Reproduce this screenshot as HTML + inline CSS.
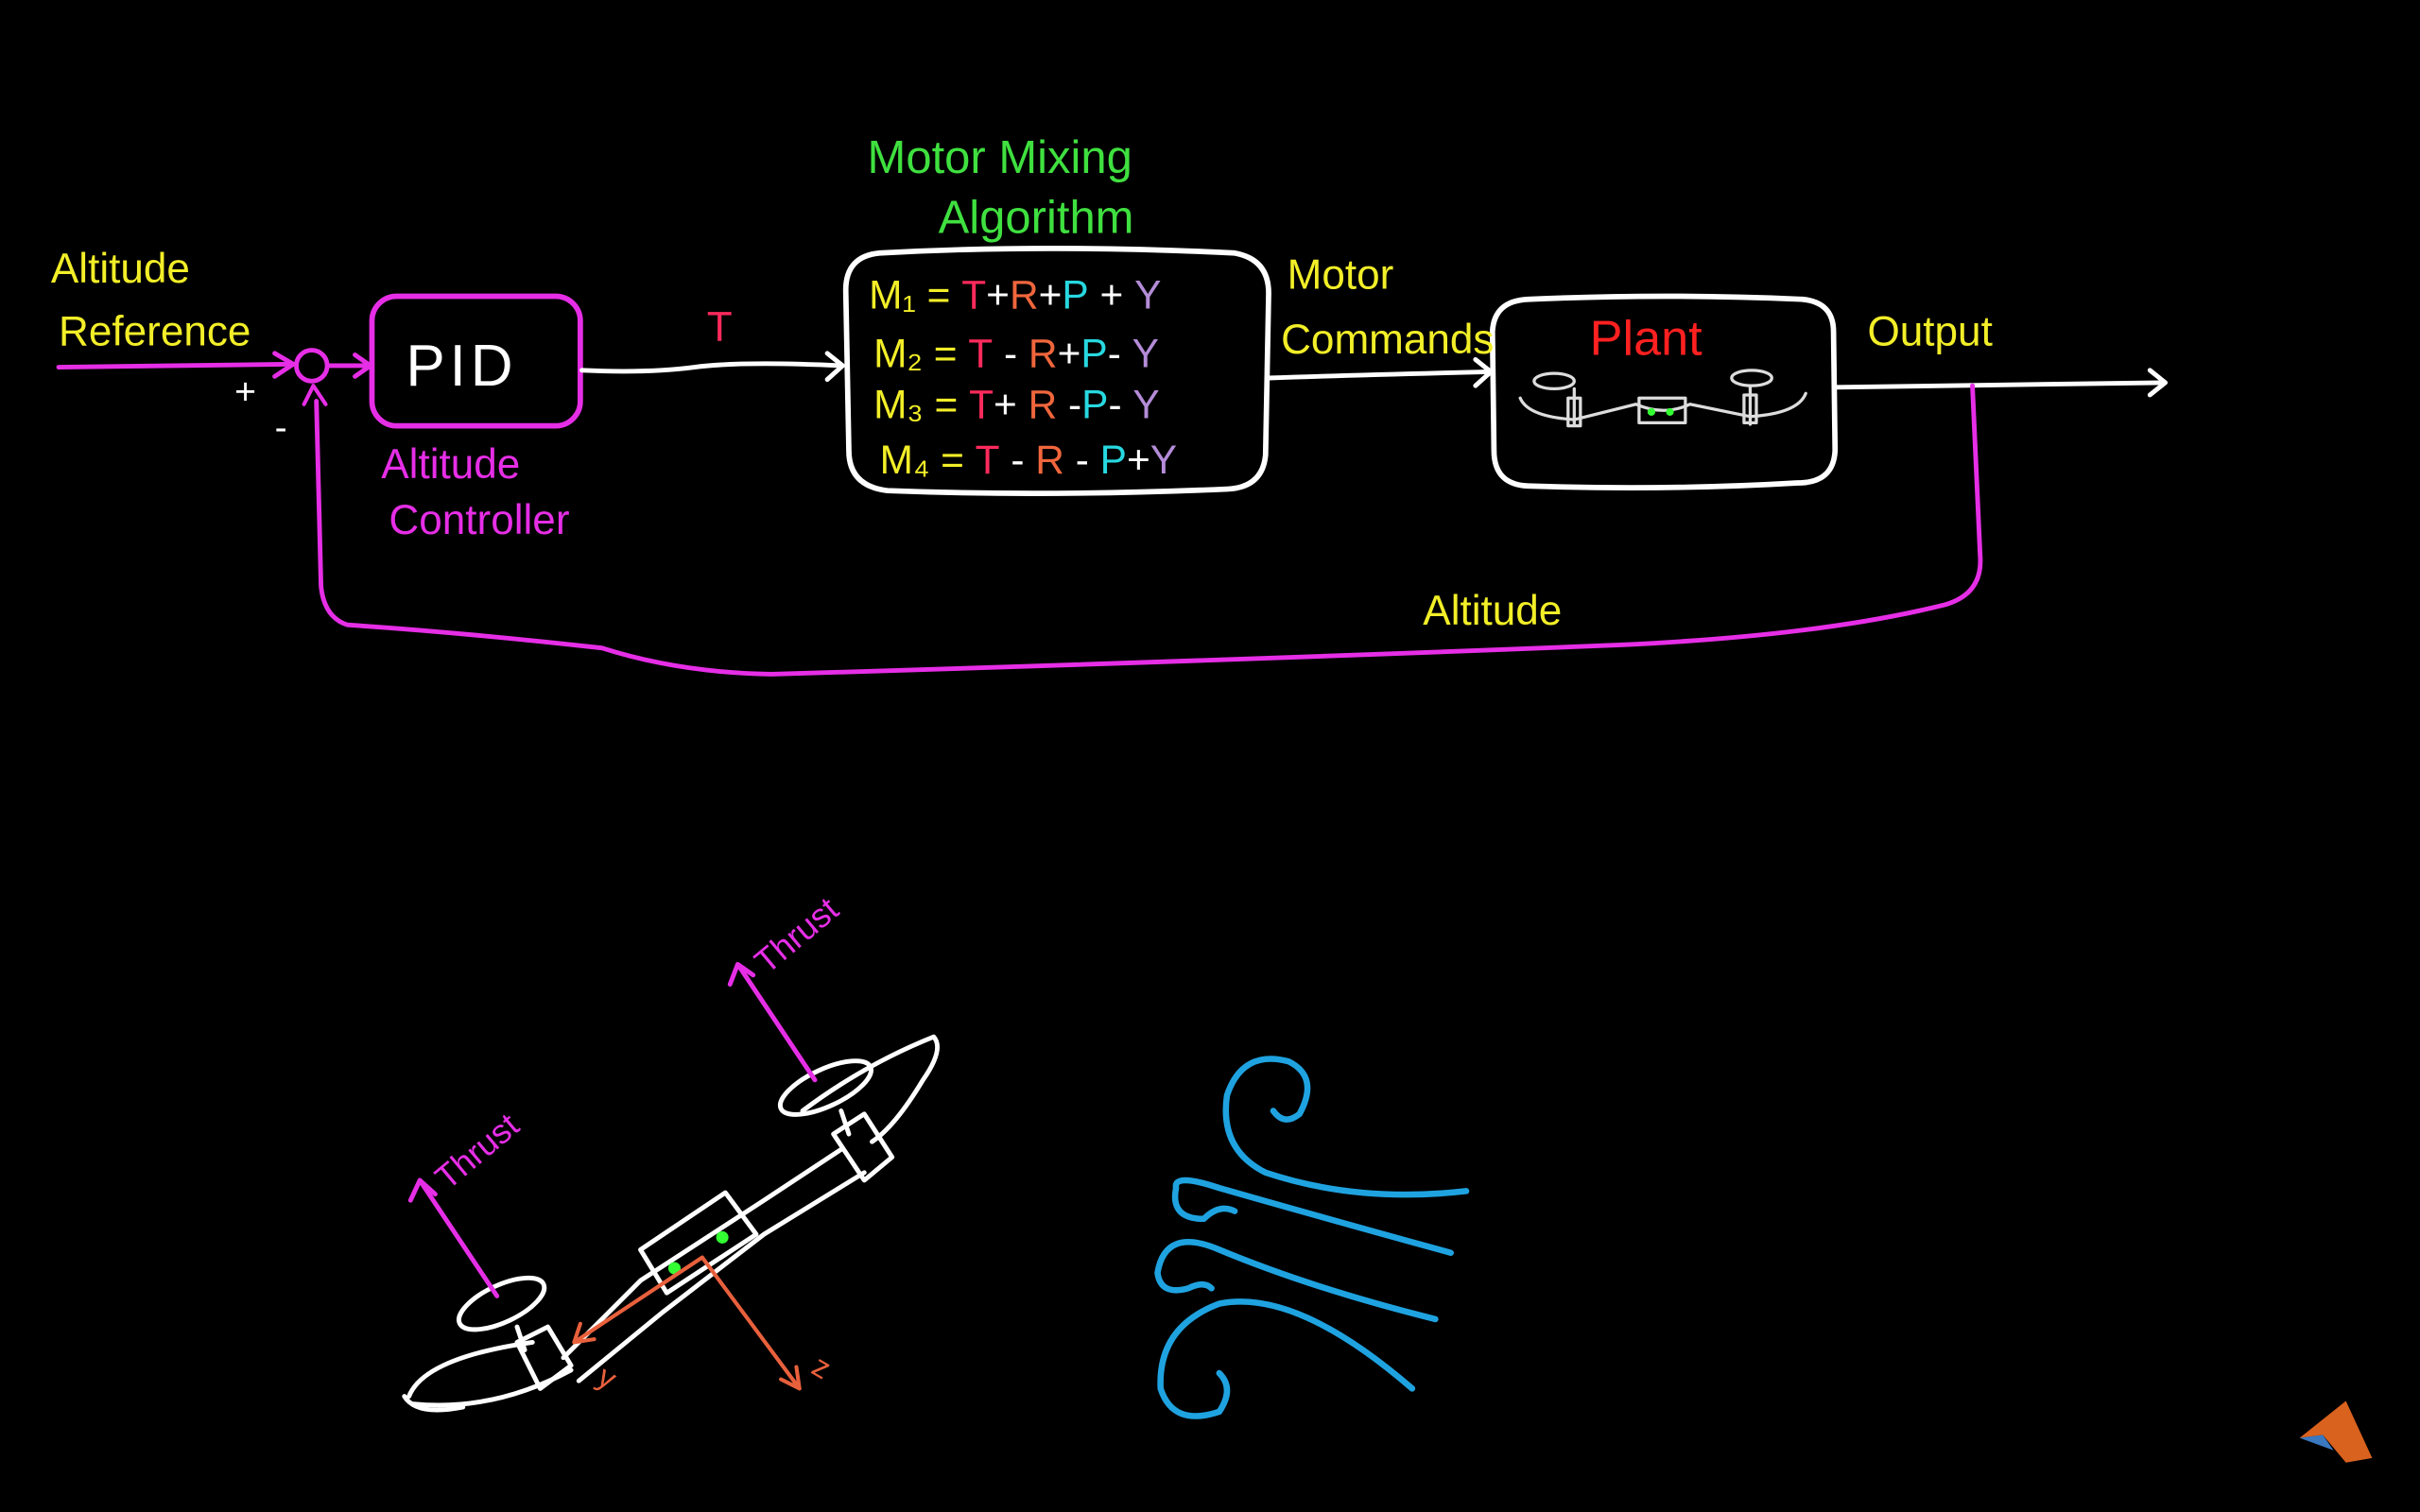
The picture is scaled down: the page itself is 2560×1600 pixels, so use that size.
<!DOCTYPE html>
<html><head><meta charset="utf-8"><style>
html,body{margin:0;padding:0;background:#000;width:2560px;height:1600px;overflow:hidden}
svg{display:block}
text{font-family:"Liberation Sans",sans-serif}
</style></head><body>
<svg width="2560" height="1600" viewBox="0 0 1568 980" xmlns="http://www.w3.org/2000/svg">
<rect width="1568" height="980" fill="#000"/>
<g fill="none" stroke-linecap="round" stroke-linejoin="round">
<!-- reference input -->
<path d="M38 238 L190 236" stroke="#e62ee6" stroke-width="3"/>
<path d="M178 229 L190 236 L178 244" stroke="#e62ee6" stroke-width="3"/>
<circle cx="202" cy="237" r="10" stroke="#e62ee6" stroke-width="3"/>
<path d="M213 237 L240 237 M230 230 L240 237 L230 244" stroke="#e62ee6" stroke-width="3"/>
<!-- PID box -->
<rect x="241" y="192" width="135" height="84" rx="16" stroke="#e62ee6" stroke-width="3.5"/>
<!-- T line -->
<path d="M377 240 Q420 242 450 238 T545 237" stroke="#fff" stroke-width="3"/>
<path d="M536 229 L546 237 L536 246" stroke="#fff" stroke-width="3"/>
<!-- Mixing box -->
<path d="M570 164 Q680 158 800 164 Q822 168 822 190 L820 295 Q818 316 795 317 Q680 322 575 318 Q550 315 550 292 L548 188 Q548 166 570 164Z" stroke="#fff" stroke-width="3.5"/>
<!-- motor commands line -->
<path d="M822 245 Q880 243 965 241" stroke="#fff" stroke-width="3"/>
<path d="M956 233 L966 241 L956 250" stroke="#fff" stroke-width="3"/>
<!-- Plant box -->
<path d="M990 194 Q1080 190 1168 194 Q1188 196 1188 215 L1189 292 Q1188 313 1165 313 Q1080 318 990 315 Q968 314 968 292 L967 215 Q968 195 990 194Z" stroke="#fff" stroke-width="3.5"/>
<!-- plant drone -->
<g stroke="#ddd" stroke-width="2">
<ellipse cx="1007" cy="247" rx="13" ry="5"/><ellipse cx="1135" cy="245" rx="13" ry="5"/>
<path d="M1020 252 L1020 275 M1134 250 L1134 275 M985 258 Q990 270 1020 272 L1060 262 Q1078 270 1095 262 L1134 270 Q1165 268 1170 255"/>
<rect x="1016" y="258" width="8" height="18"/><rect x="1130" y="256" width="8" height="18"/>
<path d="M1062 258 L1092 258 L1092 274 L1062 274Z"/>
</g>
<circle cx="1070" cy="267" r="2.5" fill="#3f3" stroke="none"/><circle cx="1082" cy="267" r="2.5" fill="#3f3" stroke="none"/>
<!-- output line -->
<path d="M1190 251 Q1300 249 1402 248" stroke="#fff" stroke-width="3"/>
<path d="M1393 240 L1403 248 L1393 256" stroke="#fff" stroke-width="3"/>
<!-- feedback -->
<path d="M1278 250 L1283 360 Q1285 385 1260 392 Q1180 412 1050 418 Q800 428 500 437 Q440 436 390 420 Q300 410 225 405 Q210 400 208 380 L205 260" stroke="#e62ee6" stroke-width="3"/>
<path d="M197 262 L203 250 L211 262" stroke="#e62ee6" stroke-width="2.5"/>
<!-- bottom drone -->
<g stroke="#fff" stroke-width="3">
<path d="M265 905 Q275 880 345 870 M268 910 Q320 915 370 888"/>
<path d="M262 905 Q270 918 300 912"/>
<ellipse cx="325" cy="845" rx="30" ry="12" transform="rotate(-25 325 845)"/>
<path d="M335 860 L340 875"/>
<path d="M335 870 L355 860 L370 885 L350 900Z"/>
<path d="M365 880 L415 830 L495 778 L545 745 M375 895 L430 850 L495 800 L560 760"/>
<path d="M415 810 L470 773 L490 800 L432 838Z"/>
<path d="M540 735 L560 722 L578 750 L560 765Z"/>
<ellipse cx="535" cy="705" rx="32" ry="12" transform="rotate(-25 535 705)"/>
<path d="M545 720 L550 735 M520 720 Q560 690 605 672 Q612 680 598 700 Q580 730 565 740"/>
</g>
<circle cx="437" cy="822" r="4" fill="#3f3" stroke="none"/><circle cx="468" cy="802" r="4" fill="#3f3" stroke="none"/>
<g stroke="#e8603c" stroke-width="2.5">
<path d="M455 815 L372 870 M372 870 L385 868 M372 870 L376 858"/>
<path d="M455 815 L518 900 M518 900 L516 886 M518 900 L506 894"/>
</g>
<g stroke="#e62ee6" stroke-width="3">
<path d="M322 840 L272 765 M266 778 L272 765 L282 774"/>
<path d="M528 700 L478 625 M473 638 L478 625 L488 632"/>
</g>
<!-- wind -->
<g stroke="#1fa3e0" stroke-width="4">
<path d="M950 772 Q880 780 820 760 Q790 745 795 710 Q805 680 835 688 Q855 698 842 722 Q832 730 825 720"/>
<path d="M940 812 Q860 790 790 770 Q760 760 762 770 Q758 790 780 790 Q790 780 800 785"/>
<path d="M930 855 Q850 835 790 810 Q755 795 750 825 Q752 840 770 835 Q780 830 785 835"/>
<path d="M915 900 Q840 835 790 845 Q750 860 752 900 Q760 925 790 915 Q800 900 790 890"/>
</g>
</g>
<!-- text -->
<g font-size="27">
<text x="33" y="183" fill="#f2ee28">Altitude</text>
<text x="38" y="224" fill="#f2ee28">Reference</text>
<text x="152" y="262" fill="#fff" font-size="24">+</text>
<text x="178" y="285" fill="#fff" font-size="24">-</text>
<text x="263" y="250" fill="#fff" font-size="38" letter-spacing="3">PID</text>
<text x="247" y="310" fill="#e62ee6">Altitude</text>
<text x="252" y="346" fill="#e62ee6">Controller</text>
<text x="458" y="221" fill="#ff2a5c">T</text>
<text x="562" y="112" fill="#3fe03f" font-size="30">Motor Mixing</text>
<text x="608" y="151" fill="#3fe03f" font-size="30">Algorithm</text>
<text x="834" y="187" fill="#f2ee28">Motor</text>
<text x="830" y="229" fill="#f2ee28">Commands</text>
<text x="1030" y="230" fill="#ff2020" font-size="32">Plant</text>
<text x="1210" y="224" fill="#f2ee28">Output</text>
<text x="922" y="405" fill="#f2ee28">Altitude</text>
<g font-size="26">
<text x="563" y="200"><tspan fill="#f2ee28">M₁ = </tspan><tspan fill="#ff2a5c">T</tspan><tspan fill="#fff">+</tspan><tspan fill="#f0663c">R</tspan><tspan fill="#fff">+</tspan><tspan fill="#27d8e0">P</tspan><tspan fill="#fff"> + </tspan><tspan fill="#b48cd8">Y</tspan></text>
<text x="566" y="238"><tspan fill="#f2ee28">M₂ = </tspan><tspan fill="#ff2a5c">T</tspan><tspan fill="#fff"> - </tspan><tspan fill="#f0663c">R</tspan><tspan fill="#fff">+</tspan><tspan fill="#27d8e0">P</tspan><tspan fill="#fff">- </tspan><tspan fill="#b48cd8">Y</tspan></text>
<text x="566" y="271"><tspan fill="#f2ee28">M₃ = </tspan><tspan fill="#ff2a5c">T</tspan><tspan fill="#fff">+ </tspan><tspan fill="#f0663c">R</tspan><tspan fill="#fff"> -</tspan><tspan fill="#27d8e0">P</tspan><tspan fill="#fff">- </tspan><tspan fill="#b48cd8">Y</tspan></text>
<text x="570" y="307"><tspan fill="#f2ee28">M₄ = </tspan><tspan fill="#ff2a5c">T</tspan><tspan fill="#fff"> - </tspan><tspan fill="#f0663c">R</tspan><tspan fill="#fff"> - </tspan><tspan fill="#27d8e0">P</tspan><tspan fill="#fff">+</tspan><tspan fill="#b48cd8">Y</tspan></text>
</g>
<text x="0" y="0" fill="#e62ee6" font-size="22" transform="translate(290 772) rotate(-40)">Thrust</text>
<text x="0" y="0" fill="#e62ee6" font-size="22" transform="translate(497 632) rotate(-40)">Thrust</text>
<text x="390" y="900" fill="#e8603c" font-size="20" transform="rotate(30 395 890)">y</text>
<text x="528" y="893" fill="#e8603c" font-size="20" transform="rotate(30 533 885)">z</text>
</g>
<!-- logo -->
<path d="M1490 932 L1520 908 L1537 945 L1520 948 L1505 930Z" fill="#d9621e"/>
<path d="M1490 932 L1505 930 L1512 940Z" fill="#3a78c0"/>
</svg>
</body></html>
